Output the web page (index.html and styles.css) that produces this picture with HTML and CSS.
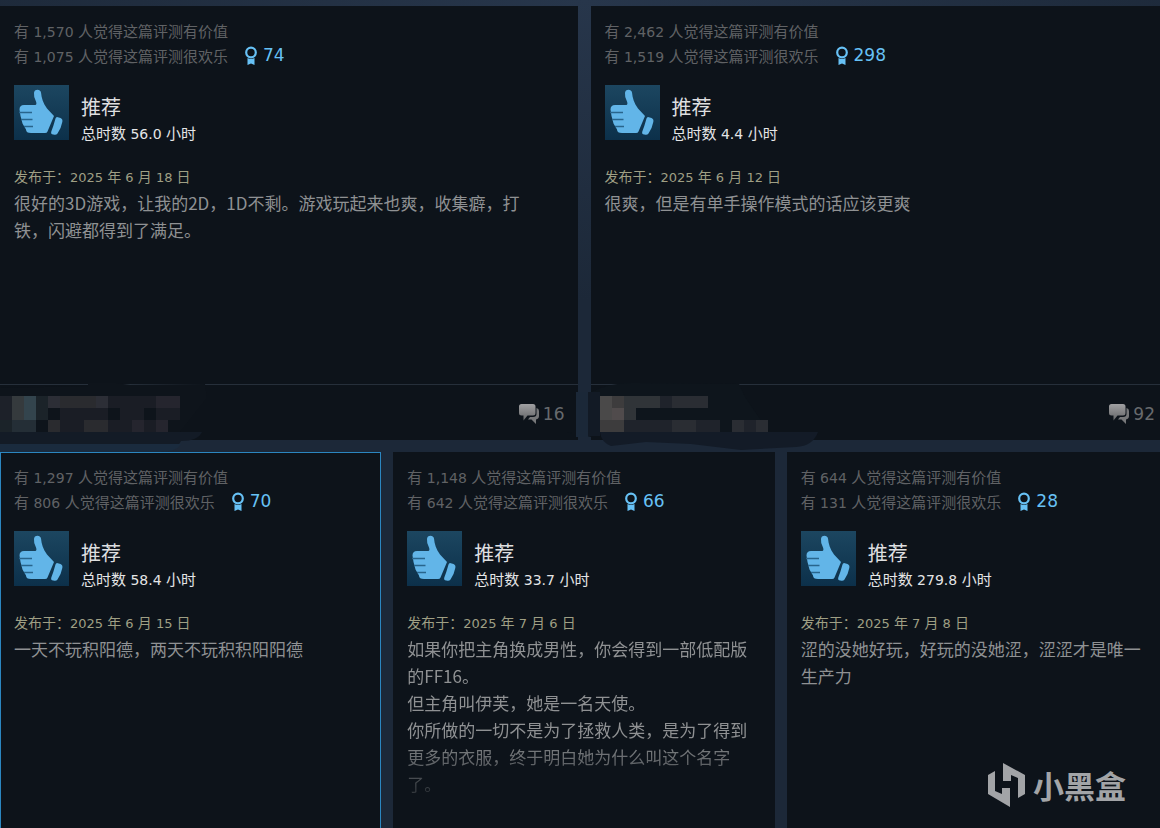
FILE: index.html
```html
<!DOCTYPE html>
<html lang="zh-CN">
<head>
<meta charset="utf-8">
<title>评测</title>
<link rel="stylesheet" href="styles.css">
</head>
<body>
<svg class="defs" aria-hidden="true">
  <defs>
    <linearGradient id="bubble" x1="0" y1="0" x2="0" y2="1"><stop offset="0" stop-color="#a0a0a2"/><stop offset="1" stop-color="#646567"/></linearGradient>
    <symbol id="thumb" viewBox="0 0 55 55">
      <path fill="#62b5e8" d="M21 5.500C23 4 26.500 4.500 27 7.500C27.500 13 29 18 33 23.500L40 31L33.500 46.500Q33 48 31 48H17Q12 48 12 44.500L8.500 38.500L6.500 31L5.500 24.500Q5.500 20 10 20H21.500Q23 19.500 22 16.500Q19.500 12 20 8Q20 6.500 21 5.500Z"/>
      <path fill="none" stroke="#28658c" stroke-width="1.300" d="M5 27.500H18M7 34.500H18.500M10 41.500H19"/>
      <path fill="#62b5e8" d="M43 32L46.500 33Q49 34 48.300 37Q47 44 43.500 48.500Q42.500 50 40.500 49.800L38 49.300Q36.500 48.500 37.300 46.500Q39.500 41 41.500 33.500Q42 32 43 32Z"/>
    </symbol>
    <symbol id="award" viewBox="0 0 12 20">
      <circle cx="6" cy="6.500" r="4.800" fill="none" stroke="#67c1f5" stroke-width="2.200"/>
      <path fill="#67c1f5" d="M2.500 12Q6 14 9.500 12V19L6 17.500L2.500 19Z"/>
    </symbol>
    <symbol id="comments" viewBox="0 0 20 20">
      <path fill="#77787a" d="M17.500 4Q20 4.500 20 7V12Q20 14.500 17 15.500V20L12.500 15.500H9L11 13H14Q17.500 13 17.500 10Z"/>
      <path fill="url(#bubble)" d="M2.500 0H14Q16.500 0 16.500 2.500V9Q16.500 11.500 14 11.500H8.500L4.500 16.500V11.500H2.500Q0 11.500 0 9V2.500Q0 0 2.500 0Z"/>
    </symbol>
  </defs>
</svg>

<main class="reviews">
  <div class="row two">
    <article class="card tall">
      <header class="votes">
        <p>有<span class="num"> 1,570 </span>人觉得这篇评测有价值</p>
        <p>有<span class="num"> 1,075 </span>人觉得这篇评测很欢乐<span class="award"><svg><use href="#award"/></svg>74</span></p>
      </header>
      <div class="verdict"><svg class="thumb"><use href="#thumb"/></svg>
        <div><h2>推荐</h2><p>总时数<span class="num"> 56.0 </span>小时</p></div></div>
      <p class="date">发布于：<span class="num">2025 </span>年<span class="num"> 6 </span>月<span class="num"> 18 </span>日</p>
      <p class="text">很好的3D游戏，让我的2D，1D不剩。游戏玩起来也爽，收集癖，打铁，闪避都得到了满足。</p>
      <footer class="foot">
        <svg class="mosaic" viewBox="0 0 230 76" aria-hidden="true">
          <path fill="#0e141b" d="M88 3H116L130 5L205 4L207 18L180 52L0 52V8L88 6Z"/>
          <path fill="#131b26" d="M0 52H202Q198 61 181 61L178 66H0Z"/>
          <path fill="#1a2b3e" d="M0 64H181Q176 72 160 72H0Z"/>
          <path fill="#1d2129" d="M0 16H12V40H0Z"/>
          <path fill="#353a3d" d="M12 16H24V40H12Z"/>
          <path fill="#33444d" d="M24 16H36V40H24Z"/>
          <path fill="#1b2329" d="M36 16H48V40H36ZM0 40H12V52H0Z"/>
          <path fill="#242e36" d="M12 40H36V52H12Z"/>
          <path fill="#2c2e36" d="M48 16H60V28H48ZM96 16H108V28H96Z"/>
          <path fill="#2a2b2f" d="M60 16H96V28H60ZM48 40H60V52H48ZM84 40H108V52H84Z"/>
          <path fill="#1a1d25" d="M108 16H156V28H108ZM60 28H108V40H60ZM120 28H144V40H120ZM156 28H180V40H156ZM60 40H84V52H60ZM108 40H132V52H108ZM144 40H156V52H144Z"/>
          <path fill="#25252e" d="M156 16H180V28H156ZM132 40H144V52H132ZM156 40H168V52H156Z"/>
        </svg>
        <a class="comments" href="#"><svg><use href="#comments"/></svg>16</a>
      </footer>
    </article>
    <article class="card tall">
      <header class="votes">
        <p>有<span class="num"> 2,462 </span>人觉得这篇评测有价值</p>
        <p>有<span class="num"> 1,519 </span>人觉得这篇评测很欢乐<span class="award"><svg><use href="#award"/></svg>298</span></p>
      </header>
      <div class="verdict"><svg class="thumb"><use href="#thumb"/></svg>
        <div><h2>推荐</h2><p>总时数<span class="num"> 4.4 </span>小时</p></div></div>
      <p class="date">发布于：<span class="num">2025 </span>年<span class="num"> 6 </span>月<span class="num"> 12 </span>日</p>
      <p class="text">很爽，但是有单手操作模式的话应该更爽</p>
      <footer class="foot">
        <svg class="mosaic" viewBox="0 0 230 76" aria-hidden="true">
          <path fill="#0e151c" d="M-24 52L-10 56V12H0Q20 2 45 3L148 4L154 17L178 52H0V57Z"/>
          <path fill="#1b2838" d="M-15 12H-3V57H-15Z"/>
          <path fill="#121a25" d="M-3 12H9V56H-3Z"/>
          <path fill="#131b27" d="M9 52H227Q222 66 205 67L150 70L100 64L55 62L20 66Q10 62 9 52Z"/>
          <path fill="#4a4949" d="M9 16H21V40H9Z"/>
          <path fill="#3d3c3d" d="M21 16H33V28H21ZM9 40H33V52H9Z"/>
          <path fill="#504b4c" d="M21 28H33V40H21Z"/>
          <path fill="#303438" d="M33 16H69V28H33ZM33 28H45V40H33Z"/>
          <path fill="#2a2d33" d="M81 16H117V28H81ZM81 40H105V52H81ZM141 40H153V52H141ZM165 40H177V52H165Z"/>
          <path fill="#1f232b" d="M69 16H81V28H69ZM33 40H81V52H33ZM105 40H129V52H105ZM153 40H165V52H153Z"/>
        </svg>
        <a class="comments" href="#"><svg><use href="#comments"/></svg>92</a>
      </footer>
    </article>
  </div>

  <div class="row three">
    <article class="card active">
      <header class="votes">
        <p>有<span class="num"> 1,297 </span>人觉得这篇评测有价值</p>
        <p>有<span class="num"> 806 </span>人觉得这篇评测很欢乐<span class="award"><svg><use href="#award"/></svg>70</span></p>
      </header>
      <div class="verdict"><svg class="thumb"><use href="#thumb"/></svg>
        <div><h2>推荐</h2><p>总时数<span class="num"> 58.4 </span>小时</p></div></div>
      <p class="date">发布于：<span class="num">2025 </span>年<span class="num"> 6 </span>月<span class="num"> 15 </span>日</p>
      <p class="text">一天不玩积阳德，两天不玩积积阳阳德</p>
    </article>
    <article class="card">
      <header class="votes">
        <p>有<span class="num"> 1,148 </span>人觉得这篇评测有价值</p>
        <p>有<span class="num"> 642 </span>人觉得这篇评测很欢乐<span class="award"><svg><use href="#award"/></svg>66</span></p>
      </header>
      <div class="verdict"><svg class="thumb"><use href="#thumb"/></svg>
        <div><h2>推荐</h2><p>总时数<span class="num"> 33.7 </span>小时</p></div></div>
      <p class="date">发布于：<span class="num">2025 </span>年<span class="num"> 7 </span>月<span class="num"> 6 </span>日</p>
      <p class="text faded">如果你把主角换成男性，你会得到一部低配版的FF16。<br>但主角叫伊芙，她是一名天使。<br>你所做的一切不是为了拯救人类，是为了得到更多的衣服，终于明白她为什么叫这个名字了。</p>
    </article>
    <article class="card">
      <header class="votes">
        <p>有<span class="num"> 644 </span>人觉得这篇评测有价值</p>
        <p>有<span class="num"> 131 </span>人觉得这篇评测很欢乐<span class="award"><svg><use href="#award"/></svg>28</span></p>
      </header>
      <div class="verdict"><svg class="thumb"><use href="#thumb"/></svg>
        <div><h2>推荐</h2><p>总时数<span class="num"> 279.8 </span>小时</p></div></div>
      <p class="date">发布于：<span class="num">2025 </span>年<span class="num"> 7 </span>月<span class="num"> 8 </span>日</p>
      <p class="text">涩的没她好玩，好玩的没她涩，涩涩才是唯一生产力</p>
    </article>
  </div>
</main>

<div class="watermark">
  <svg viewBox="0 0 38 46" aria-hidden="true">
    <path d="M0 13L7 9V29L14 32V26H22V45L0 32Z"/>
    <path d="M15 1L37 13V32L30 36V16L23 13V19H15Z"/>
  </svg>
  <span>小黑盒</span>
</div>
</body>
</html>
```

FILE: styles.css
```css
* { box-sizing: border-box; }
body {
  margin: 0;
  height: 100vh;
  overflow: hidden;
  background: #1c2838;
  color: #8f9193;
  font-family: "Noto Sans CJK SC", sans-serif;
}
h2, p { margin: 0; font-weight: 400; }
.defs { position: absolute; width: 0; height: 0; }

.reviews {
  display: flex;
  flex-direction: column;
  gap: 12px;
  height: 100%;
  margin-right: -8px;
  padding-top: 6px;
  background: radial-gradient(ellipse 700px 300px at 50% 0, #27364b, #1c2838);
}
.row { display: grid; }
.two { grid-template-columns: repeat(2, 1fr); gap: 13px; }
.three { grid-template-columns: repeat(3, 1fr); gap: 12px; flex: 1; }

.card {
  display: flex;
  flex-direction: column;
  padding: 11px 13px 0;
  border: 1px solid #0d131a;
  border-bottom: 0;
  background: #0d131a;
}
.tall { min-height: 434px; }
.active { border-color: #2b86c0; }

.num { font-family: "DejaVu Sans", sans-serif; font-size: 14px; white-space: pre; }
.votes { font-size: 15px; line-height: 25px; color: #606265; }
.votes p { display: flex; align-items: baseline; height: 25px; white-space: nowrap; }
.award {
  display: flex;
  align-items: center;
  align-self: flex-start;
  gap: 6px;
  margin-left: 17px;
  color: #67c1f5;
  font-family: "DejaVu Sans", sans-serif;
  font-size: 17px;
  line-height: 25px;
}
.award svg { width: 12px; height: 20px; }

.verdict { display: flex; gap: 12px; margin-top: 17px; }
.thumb { width: 55px; height: 55px; background: linear-gradient(#1c4660, #0c304a); }
.verdict h2 { margin-top: 8px; font-size: 20px; line-height: 28px; color: #dedfe0; }
.verdict p { font-size: 15px; line-height: 24px; color: #e4e5e6; }

.date { margin-top: 18px; font-size: 14px; line-height: 24px; color: #9f9f84; }
.date .num { font-size: 13px; }
.text { margin-top: -1px; padding-right: 13px; font-size: 17px; line-height: 27px; }
.faded {
  -webkit-mask-image: linear-gradient(#000 100px, rgba(0, 0, 0, .3) 155px);
  mask-image: linear-gradient(#000 100px, rgba(0, 0, 0, .3) 155px);
}

.foot {
  position: relative;
  display: flex;
  align-items: center;
  justify-content: flex-end;
  height: 56px;
  margin: auto -14px 0;
  padding: 2px 13px 0;
  border-top: 1px solid #262f3a;
}
.mosaic { position: absolute; left: 0; top: -5px; width: 230px; height: 76px; overflow: visible; }
.comments {
  display: flex;
  align-items: center;
  gap: 4px;
  color: #676a6d;
  font-family: "DejaVu Sans", sans-serif;
  font-size: 17px;
  text-decoration: none;
}
.comments svg { width: 20px; height: 20px; }

.watermark {
  position: absolute;
  right: 34px;
  bottom: 20px;
  display: flex;
  align-items: center;
  gap: 7px;
  color: #a2a4a7;
  font-size: 31px;
  font-weight: 700;
  line-height: 42px;
}
.watermark svg { width: 38px; height: 46px; fill: #a2a4a7; }
```
